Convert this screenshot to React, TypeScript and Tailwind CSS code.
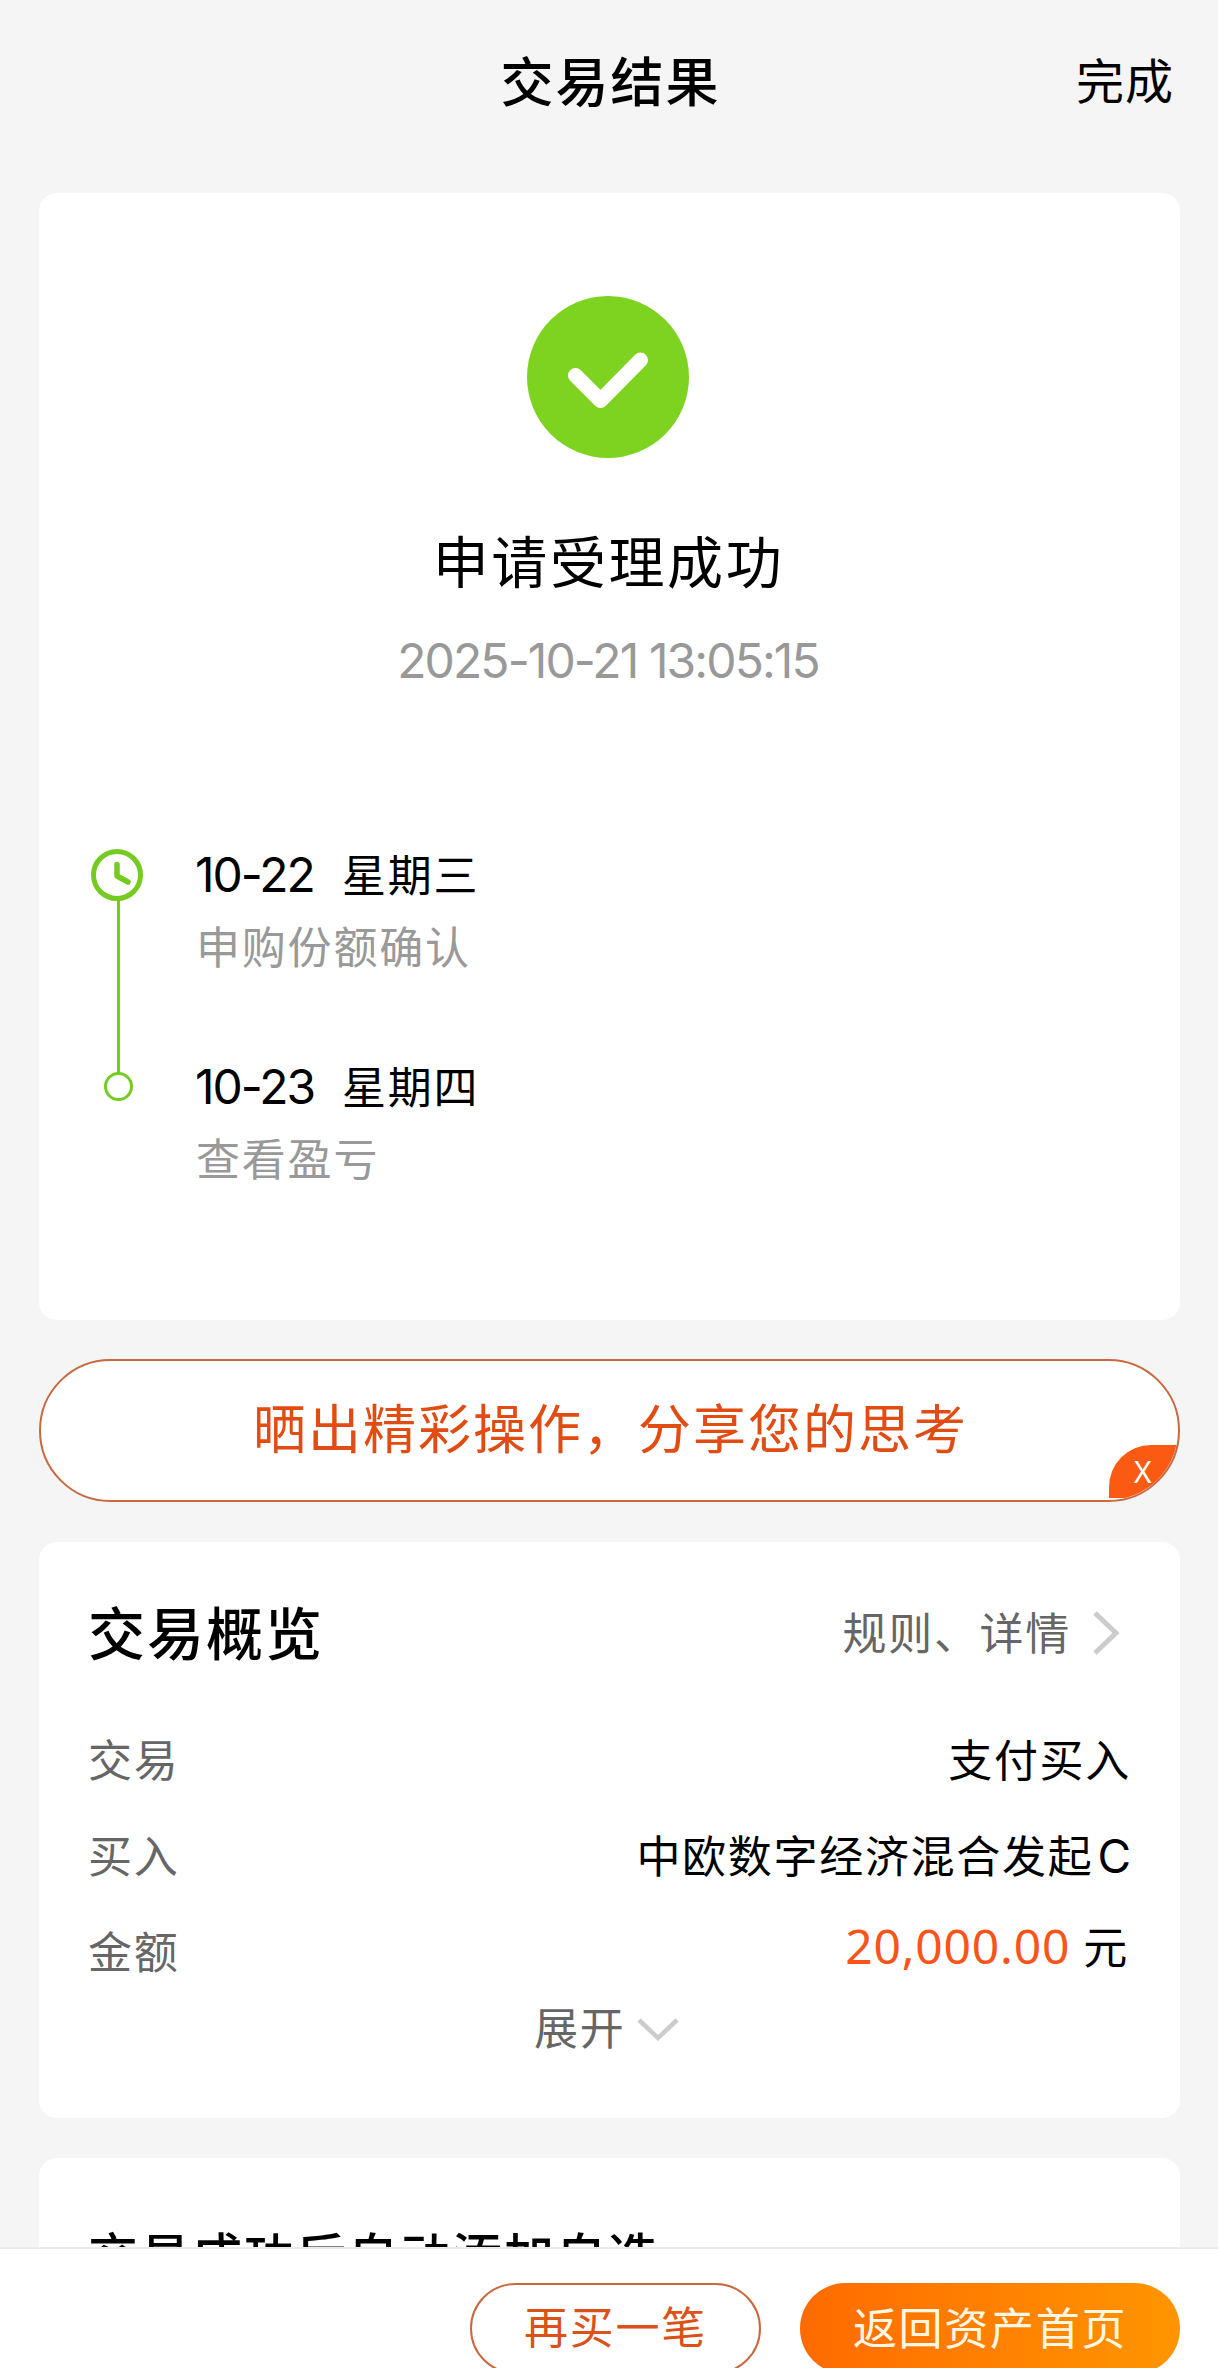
const steps = [
  { date: "10-22", day: "星期三", text: "申购份额确认" },
  { date: "10-23", day: "星期四", text: "查看盈亏" },
];

const Header = () => {
  return (
    <div className="grid grid-cols-3 items-center h-[161px] shrink-0">
      <div></div>
      <p className="text-center text-[53px] tracking-[2px] font-medium whitespace-nowrap ml-[3px] -mt-[2px]">
        交易结果
      </p>
      <p className="text-right text-[48px] tracking-[1px] whitespace-nowrap pr-[44px] -mt-[5px]">
        完成
      </p>
    </div>
  );
};

const ResultCard = () => {
  return (
    <div className="bg-white rounded-[18px] h-[1127px] pt-[103px] shrink-0">
      <svg
        viewBox="0 0 162 162"
        className="w-[162px] h-[162px] ml-[488px]"
        fill="none"
      >
        <circle cx="81" cy="81" r="81" fill="#7ed321" />
        <path
          d="M48.5 79.5L73.5 104.5L113.5 64"
          stroke="#fff"
          strokeWidth="15"
          strokeLinecap="round"
          strokeLinejoin="round"
        />
      </svg>

      <p className="mt-[61px] text-center text-[56px] leading-[80px] tracking-[2.6px] -ml-[2px]">
        申请受理成功
      </p>
      <p className="mt-[32px] text-center font-['Inter'] text-[48px] leading-[60px] tracking-[-1.9px] -ml-[3px] text-[#999]">
        2025-10-21 13:05:15
      </p>

      <div className="flex mt-[152px] pl-[52px]">
        <svg
          viewBox="0 0 52 254"
          className="w-[52px] h-[254px] mt-[6px]"
          fill="none"
          stroke="#76cb22"
        >
          <circle cx="26" cy="26" r="23.5" strokeWidth="5" />
          <path
            d="M26 15.5V27L37 33"
            strokeWidth="5.5"
            strokeLinecap="round"
            strokeLinejoin="round"
          />
          <path d="M27.5 51V224" strokeWidth="3" />
          <circle cx="27.5" cy="237.5" r="13" strokeWidth="3" />
        </svg>

        <div className="flex flex-col gap-[86px] ml-[52px]">
          {steps.map((step) => (
            <div key={step.date}>
              <div className="flex items-baseline h-[60px] text-[44px] leading-[60px] tracking-[1.7px]">
                <span className="font-['Inter'] text-[48px] tracking-[-2px] w-[147px]">
                  {step.date}
                </span>
                <span>{step.day}</span>
              </div>
              <p className="mt-[18px] ml-[1px] text-[44px] leading-[48px] tracking-[1.8px] text-[#999]">
                {step.text}
              </p>
            </div>
          ))}
        </div>
      </div>
    </div>
  );
};

const ShareBanner = () => {
  return (
    <div className="relative overflow-hidden mt-[39px] h-[143px] shrink-0 rounded-full border-2 border-[#c9693f] bg-white flex items-center justify-center">
      <p className="text-[53px] tracking-[2px] text-[#e04c12] whitespace-nowrap -mt-[7px] ml-[2px]">
        晒出精彩操作，分享您的思考
      </p>
      <div className="absolute right-0 bottom-[2px] w-[69px] h-[53px] rounded-tl-[42px] bg-[#fb5a12] text-white text-[30px] leading-[53px] font-['Noto_Sans']">
        <span className="ml-[25px]">X</span>
      </div>
    </div>
  );
};

const Overview = () => {
  return (
    <div className="mt-[40px] h-[576px] shrink-0 bg-white rounded-[18px] pl-[49px] pr-[49px] pt-[49px] text-[44px] tracking-[1.7px]">
      <div className="flex justify-between items-center h-[80px]">
        <p className="text-[57px] tracking-[2px] font-medium">交易概览</p>
        <div className="flex items-center text-[#666]">
          <span>规则、详情</span>
          <svg
            viewBox="0 0 28 46"
            className="w-[28px] h-[46px] ml-[21px] mr-[11px] mt-[4px]"
            fill="none"
          >
            <path d="M3 3L24 23L3 43" stroke="#ccc" strokeWidth="5" />
          </svg>
        </div>
      </div>

      <div className="flex justify-between items-center h-[64px] mt-[55px]">
        <span className="text-[#666]">交易</span>
        <span>支付买入</span>
      </div>
      <div className="flex justify-between items-center h-[64px] mt-[32px]">
        <span className="text-[#666]">买入</span>
        <div className="flex items-baseline mt-[3px]">
          <span>中欧数字经济混合发起</span>
          <span className="font-['Inter'] text-[46px] tracking-normal ml-[4px]">
            C
          </span>
        </div>
      </div>
      <div className="flex justify-between items-center h-[64px] mt-[32px]">
        <span className="text-[#666]">金额</span>
        <div className="flex items-baseline -mt-[8px] mr-[2px]">
          <span className="font-['Noto_Sans'] text-[48px] tracking-[0.8px] text-[#f9541a] mr-[13px]">
            20,000.00
          </span>
          <span>元</span>
        </div>
      </div>

      <div className="flex items-center h-[64px] mt-[12px] pl-[446px] text-[#666]">
        <span>展开</span>
        <svg
          viewBox="0 0 42 26"
          className="w-[42px] h-[26px] ml-[12px] mt-[7px]"
          fill="none"
        >
          <path d="M2 3L21 21L40 3" stroke="#ccc" strokeWidth="4.5" />
        </svg>
      </div>
    </div>
  );
};

const Footer = () => {
  return (
    <div className="h-[121px] shrink-0 bg-white border-t-2 border-[#ebebeb] pt-[34px] pr-[38px] flex justify-end items-start gap-[39px] text-[44px] tracking-[1.7px]">
      <button className="w-[291px] h-[91px] shrink-0 rounded-full border-2 border-[#c9693f] text-[#db5219] pb-[8px]">
        再买一笔
      </button>
      <button className="w-[380px] h-[91px] shrink-0 rounded-full bg-linear-to-r from-[#ff6a00] to-[#ff9500] text-[#fff6e3] pb-[6px]">
        返回资产首页
      </button>
    </div>
  );
};

const App = () => {
  return (
    <div className="flex flex-col w-[1218px] h-[2368px] overflow-hidden bg-[#f5f5f5] text-black font-['Noto_Sans_CJK_SC',sans-serif]">
      <Header />

      <div className="flex flex-col flex-1 min-h-0 overflow-hidden pt-[32px] pl-[39px] pr-[38px]">
        <ResultCard />
        <ShareBanner />
        <Overview />

        <div className="mt-[40px] h-[300px] shrink-0 bg-white rounded-t-[18px] pt-[55px] pl-[49px]">
          <p className="text-[50px] leading-[80px] tracking-[2px] font-medium">
            交易成功后自动添加自选
          </p>
        </div>
      </div>

      <Footer />
    </div>
  );
};

export default App;
